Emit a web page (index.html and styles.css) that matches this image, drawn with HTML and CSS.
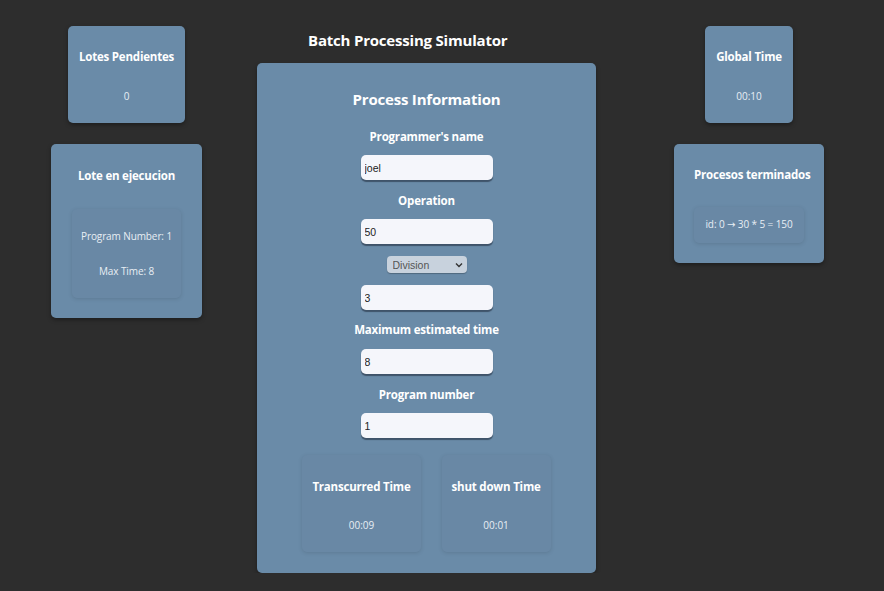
FILE: index.html
```html
<!DOCTYPE html>
<html lang="en">
<head>
<meta charset="utf-8">
<title>Batch Processing Simulator</title>
<link rel="stylesheet" href="styles.css">
</head>
<body>
<div class="layout">
  <div class="col col-left">
    <div class="card stat">
      <h3 class="card-title">Lotes Pendientes</h3>
      <p class="card-value">0</p>
    </div>
    <div class="card list-card">
      <h3 class="card-title">Lote en ejecucion</h3>
      <div class="inner inner-batch">
        <p class="inner-line">Program Number: 1</p>
        <p class="inner-line second">Max Time: 8</p>
      </div>
    </div>
  </div>

  <div class="col col-center">
    <h1 class="app-title">Batch Processing Simulator</h1>
    <div class="card main-card">
      <h2 class="main-title">Process Information</h2>
      <label class="field-label first">Programmer's name</label>
      <input class="field" type="text" value="joel">
      <label class="field-label">Operation</label>
      <input class="field" type="text" value="50">
      <span class="select-wrap">
        <select class="op-select"><option>Division</option></select>
        <svg class="chev" width="8" height="6" viewBox="0 0 8 6"><path d="M1 1.5 L4 4.5 L7 1.5" fill="none" stroke="#333" stroke-width="1.4"/></svg>
      </span>
      <input class="field after-select" type="text" value="3">
      <label class="field-label max-label">Maximum estimated time</label>
      <input class="field" type="text" value="8">
      <label class="field-label">Program number</label>
      <input class="field" type="text" value="1">
      <div class="timers">
        <div class="inner stat timer">
          <h3 class="card-title">Transcurred Time</h3>
          <p class="card-value">00:09</p>
        </div>
        <div class="inner stat timer">
          <h3 class="card-title">shut down Time</h3>
          <p class="card-value">00:01</p>
        </div>
      </div>
    </div>
  </div>

  <div class="col col-right">
    <div class="card stat">
      <h3 class="card-title">Global Time</h3>
      <p class="card-value">00:10</p>
    </div>
    <div class="card list-card">
      <h3 class="card-title">Procesos terminados</h3>
      <div class="inner inner-done">
        <p class="inner-line">id: 0 <span class="arrow">→</span> 30 * 5 = 150</p>
      </div>
    </div>
  </div>
</div>
</body>
</html>
```
FILE: styles.css
```css
html, body {
  margin: 0;
  padding: 0;
  background: #2d2d2d;
  font-family: "Open Sans", "Noto Sans", sans-serif;
  color: #fff;
}

.layout {
  display: flex;
  align-items: flex-start;
  padding: 26px 0 0 51px;
}

.col {
  display: flex;
  flex-direction: column;
  align-items: center;
}

.col-left { width: 151px; gap: 21px; }
.col-center { width: 339px; margin-left: 55px; align-items: stretch; }
.col-right { width: 150px; margin-left: 78px; gap: 21px; }

.card {
  background: #6a8ba8;
  border-radius: 5px;
  box-shadow: 0 2px 4px rgba(0,0,0,0.35);
  box-sizing: border-box;
}

.stat {
  padding: 0 11px;
  text-align: center;
}

.card-title {
  margin: 23px 0 0;
  font-size: 11.5px;
  line-height: 16px;
  font-weight: 700;
  white-space: nowrap;
  letter-spacing: -0.2px;
}

.card-value {
  margin: 24px 0 20px;
  font-size: 10px;
  line-height: 14px;
  color: #e8eef4;
}

.list-card {
  width: 100%;
  padding: 0 21px 20px;
  text-align: center;
}

.col-left .list-card .card-title { margin-top: 24px; }

.col-right .list-card { padding: 0 20px 20px; }

.inner {
  background: #6988a5;
  border-radius: 5px;
  box-shadow: 0 1px 4px rgba(0,0,0,0.12);
}

.inner-batch {
  margin-top: 25px;
  padding: 20px 0 20px;
}

.inner-done {
  margin-top: 24px;
  padding: 10px 0 11px;
}

.inner-line {
  margin: 0;
  font-size: 10px;
  line-height: 14px;
  color: #e8eef4;
  white-space: nowrap;
  letter-spacing: -0.1px;
}

.arrow {
  font-family: "DejaVu Sans", sans-serif;
  font-size: 10px;
}

.inner-line.second { margin-top: 21px; }

.app-title {
  margin: 4px 0 13px 51px;
  font-size: 15px;
  line-height: 20px;
  font-weight: 700;
  letter-spacing: -0.2px;
}

.main-card {
  display: flex;
  flex-direction: column;
  align-items: center;
  padding: 0 0 21px;
}

.main-title {
  margin: 25px 0 0;
  font-size: 15px;
  line-height: 22px;
  font-weight: 700;
  letter-spacing: -0.2px;
}

.field-label {
  display: block;
  margin: 13px 0 10px;
  font-size: 11.5px;
  line-height: 16px;
  font-weight: 700;
  letter-spacing: -0.2px;
}

.field-label.first { margin-top: 19px; }
.field-label.max-label { margin: 12px 0 11px; }

.field {
  width: 132px;
  height: 25px;
  box-sizing: border-box;
  border: none;
  border-radius: 5px;
  background: #f5f6fb;
  box-shadow: 0 2px 1px #3f5369;
  padding: 0 4px;
  font-family: "Liberation Sans", Arial, sans-serif;
  font-size: 10.5px;
  color: #222;
  outline: none;
}

.select-wrap {
  position: relative;
  display: block;
  margin: 12px 0 12px;
  width: 80px;
  height: 17px;
}

.op-select {
  display: block;
  appearance: none;
  -webkit-appearance: none;
  width: 80px;
  height: 17px;
  border: none;
  border-radius: 4px;
  background: #c8d2dd;
  box-shadow: 0 1px 1px rgba(0,0,0,0.25);
  padding: 0 0 0 6px;
  font-family: "Liberation Sans", Arial, sans-serif;
  font-size: 10.5px;
  color: #555;
  outline: none;
}

.chev {
  position: absolute;
  right: 4px;
  top: 6px;
}

.timers {
  display: flex;
  gap: 21px;
  margin-top: 17px;
}

.timer {
  padding: 0 10px;
}
.timer .card-title { margin-top: 24px; }
.timer .card-value { margin: 23px 0 20px; }
```
